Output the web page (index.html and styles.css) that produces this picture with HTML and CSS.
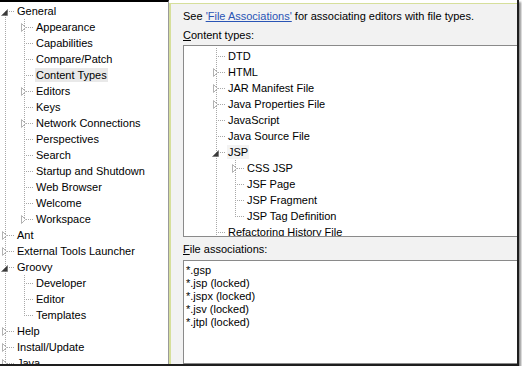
FILE: index.html
```html
<!DOCTYPE html>
<html lang="en">
<head>
    <meta charset="UTF-8">
    <title>Preferences - Content Types</title>
    <link rel="stylesheet" href="styles.css">
</head>
<body>
    <div class="frame">
        <!-- left preference tree -->
        <div class="nav tree">
            <div class="row"><span class="t first"><svg width="16" height="16"><polygon points="7.5,6.5 7.5,12.5 1.5,12.5" class="open"/></svg></span><span class="lbl">General</span></div>
            <div class="row"><span class="g v"></span><span class="t"><svg width="16" height="16"><polygon points="2.5,4.5 6.5,8.5 2.5,12.5" class="shut"/></svg></span><span class="lbl">Appearance</span></div>
            <div class="row"><span class="g v"></span><span class="t"></span><span class="lbl">Capabilities</span></div>
            <div class="row"><span class="g v"></span><span class="t"></span><span class="lbl">Compare/Patch</span></div>
            <div class="row"><span class="g v"></span><span class="t"></span><span class="lbl sel">Content Types</span></div>
            <div class="row"><span class="g v"></span><span class="t"><svg width="16" height="16"><polygon points="2.5,4.5 6.5,8.5 2.5,12.5" class="shut"/></svg></span><span class="lbl">Editors</span></div>
            <div class="row"><span class="g v"></span><span class="t"></span><span class="lbl">Keys</span></div>
            <div class="row"><span class="g v"></span><span class="t"><svg width="16" height="16"><polygon points="2.5,4.5 6.5,8.5 2.5,12.5" class="shut"/></svg></span><span class="lbl">Network Connections</span></div>
            <div class="row"><span class="g v"></span><span class="t"></span><span class="lbl">Perspectives</span></div>
            <div class="row"><span class="g v"></span><span class="t"></span><span class="lbl">Search</span></div>
            <div class="row"><span class="g v"></span><span class="t"></span><span class="lbl">Startup and Shutdown</span></div>
            <div class="row"><span class="g v"></span><span class="t"></span><span class="lbl">Web Browser</span></div>
            <div class="row"><span class="g v"></span><span class="t"></span><span class="lbl">Welcome</span></div>
            <div class="row"><span class="g v"></span><span class="t last"><svg width="16" height="16"><polygon points="2.5,4.5 6.5,8.5 2.5,12.5" class="shut"/></svg></span><span class="lbl">Workspace</span></div>
            <div class="row"><span class="t"><svg width="16" height="16"><polygon points="2.5,4.5 6.5,8.5 2.5,12.5" class="shut"/></svg></span><span class="lbl">Ant</span></div>
            <div class="row"><span class="t"><svg width="16" height="16"><polygon points="2.5,4.5 6.5,8.5 2.5,12.5" class="shut"/></svg></span><span class="lbl">External Tools Launcher</span></div>
            <div class="row"><span class="t"><svg width="16" height="16"><polygon points="7.5,6.5 7.5,12.5 1.5,12.5" class="open"/></svg></span><span class="lbl">Groovy</span></div>
            <div class="row"><span class="g v"></span><span class="t"></span><span class="lbl">Developer</span></div>
            <div class="row"><span class="g v"></span><span class="t"></span><span class="lbl">Editor</span></div>
            <div class="row"><span class="g v"></span><span class="t last"></span><span class="lbl">Templates</span></div>
            <div class="row"><span class="t"><svg width="16" height="16"><polygon points="2.5,4.5 6.5,8.5 2.5,12.5" class="shut"/></svg></span><span class="lbl">Help</span></div>
            <div class="row"><span class="t"><svg width="16" height="16"><polygon points="2.5,4.5 6.5,8.5 2.5,12.5" class="shut"/></svg></span><span class="lbl">Install/Update</span></div>
            <div class="row"><span class="t"><svg width="16" height="16"><polygon points="2.5,4.5 6.5,8.5 2.5,12.5" class="shut"/></svg></span><span class="lbl">Java</span></div>
        </div>

        <!-- content types page -->
        <div class="page">
            <div class="intro">See <a href="#" class="link">'File Associations'</a> for associating editors with file types.</div>
            <div class="label"><u>C</u>ontent types:</div>
            <div class="box typesBox tree">
                <div class="row"><span class="t"></span><span class="lbl">DTD</span></div>
                <div class="row"><span class="t"><svg width="16" height="16"><polygon points="2.5,4.5 6.5,8.5 2.5,12.5" class="shut"/></svg></span><span class="lbl">HTML</span></div>
                <div class="row"><span class="t"><svg width="16" height="16"><polygon points="2.5,4.5 6.5,8.5 2.5,12.5" class="shut"/></svg></span><span class="lbl">JAR Manifest File</span></div>
                <div class="row"><span class="t"><svg width="16" height="16"><polygon points="2.5,4.5 6.5,8.5 2.5,12.5" class="shut"/></svg></span><span class="lbl">Java Properties File</span></div>
                <div class="row"><span class="t"></span><span class="lbl">JavaScript</span></div>
                <div class="row"><span class="t"></span><span class="lbl">Java Source File</span></div>
                <div class="row"><span class="t"><svg width="16" height="16"><polygon points="7.5,6.5 7.5,12.5 1.5,12.5" class="open"/></svg></span><span class="lbl picked">JSP</span></div>
                <div class="row"><span class="g v"></span><span class="t"><svg width="16" height="16"><polygon points="2.5,4.5 6.5,8.5 2.5,12.5" class="shut"/></svg></span><span class="lbl">CSS JSP</span></div>
                <div class="row"><span class="g v"></span><span class="t"></span><span class="lbl">JSF Page</span></div>
                <div class="row"><span class="g v"></span><span class="t"></span><span class="lbl">JSP Fragment</span></div>
                <div class="row"><span class="g v"></span><span class="t last"></span><span class="lbl">JSP Tag Definition</span></div>
                <div class="row"><span class="t"></span><span class="lbl">Refactoring History File</span></div>
            </div>
            <div class="label"><u>F</u>ile associations:</div>
            <div class="box filesBox">
                <div class="item">*.gsp</div>
                <div class="item">*.jsp (locked)</div>
                <div class="item">*.jspx (locked)</div>
                <div class="item">*.jsv (locked)</div>
                <div class="item">*.jtpl (locked)</div>
            </div>
        </div>
    </div>
</body>
</html>
```

FILE: styles.css
```css
body, html {
  margin: 0;
  padding: 0;
  background-color: #fff;
  font-family: "Liberation Sans", Arial, sans-serif;
  font-size: 11px;
  color: #000;
}

.frame {
  width: 517px;
  height: 364px;
  display: flex;
  border-right: 2px solid #1e1e1e;
  border-bottom: 2px solid #1e1e1e;
  box-shadow: 2px 2px 2px rgba(0, 0, 0, 0.45);
  overflow: hidden;
}

/* tree rows */
.tree .row {
  display: flex;
  align-items: center;
  height: 16px;
  white-space: nowrap;
}

.tree .g {
  width: 19px;
  height: 16px;
  flex: none;
}

.tree .g.v {
  background: repeating-linear-gradient(to bottom, #a8a8a8 0 1px, transparent 1px 2px) 5px 0 / 1px 16px no-repeat;
}

.tree .t {
  width: 16px;
  height: 16px;
  flex: none;
  display: flex;
  background:
    repeating-linear-gradient(to right, #a8a8a8 0 1px, transparent 1px 2px) 7px 8px / 8px 1px no-repeat,
    repeating-linear-gradient(to bottom, #a8a8a8 0 1px, transparent 1px 2px) 5px 0 / 1px 16px no-repeat;

  &.last {
    background-size: 8px 1px, 1px 9px;
  }

  &.first {
    background-position: 7px 8px, 5px 8px;
    background-size: 8px 1px, 1px 8px;
  }
}

.tree .lbl {
  line-height: 14px;
  padding: 0 1px;
}

.tree .sel {
  background-color: #e9e9e9;
}

.tree .picked {
  background-color: #f3f3f3;
}

.open {
  fill: #3a3a3a;
  stroke: #6a6a6a;
  stroke-width: 0.6;
}

.shut {
  fill: #fff;
  stroke: #b2b2b2;
}

.nav {
  width: 168px;
  flex: none;
  background-color: #fff;
  border-top: 2px solid #000;
  border-right: 1px solid #9a9a9a;
  padding-top: 1px;
  overflow: hidden;
}

/* right page */
.page {
  flex: 1;
  display: flex;
  flex-direction: column;
  margin-top: 3px;
  background-color: #f2f2f2;
  border-top: 1px solid #d6df9b;
  border-left: 2px solid #d6df9b;
  padding-left: 12px;
  min-width: 0;
}

.intro {
  margin-top: 6px;
  line-height: 13px;
  white-space: nowrap;

  .link {
    color: #2a55b5;
  }
}

.label {
  margin-top: 6px;
  line-height: 13px;
}

.box {
  background-color: #fff;
  border: 1px solid #8a8a8a;
  border-right: none;
  overflow: hidden;
}

.typesBox {
  margin-top: 3px;
  padding: 2px 0 0 27px;
  box-sizing: border-box;
  height: 192px;
}

.filesBox {
  flex: 1;
  margin-top: 4px;
  padding: 3px 2px 0;

  .item {
    line-height: 13px;
  }
}
```
